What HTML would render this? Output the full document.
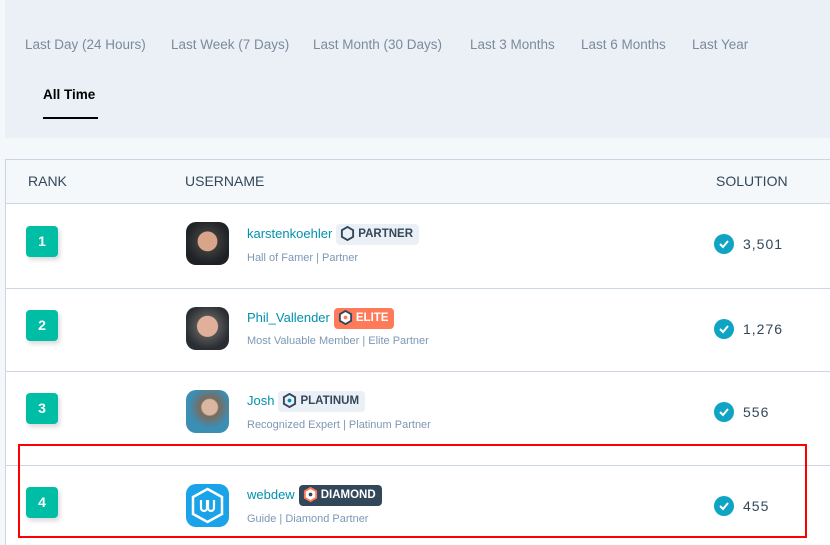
<!DOCTYPE html>
<html><head><style>
*{margin:0;padding:0;box-sizing:border-box}
html,body{width:830px;height:545px;overflow:hidden}
body{background:#f5f8fa;font-family:"Liberation Sans",sans-serif;position:relative}
.abs{position:absolute}
.top{left:5px;top:0;width:825px;height:138px;background:#eaf0f6}
.tab{position:absolute;top:37px;font-size:13.5px;color:#7b8a9c;white-space:nowrap}
.tbl{left:5px;top:159px;width:830px;height:400px;background:#fff;border:1px solid #cbd6e2}
.hdr{left:6px;top:160px;width:830px;height:44px;background:#f5f8fa;border-bottom:1px solid #cbd6e2}
.h{position:absolute;top:173px;font-size:14px;color:#33475b}
.line{position:absolute;left:6px;width:830px;height:1px;background:#cbd6e2}
.rank{position:absolute;left:26px;width:32px;height:31px;background:#00bda5;border-radius:4px;color:#fff;font-weight:bold;font-size:14px;text-align:center;line-height:31px;box-shadow:2px 3px 5px rgba(0,0,0,.15)}
.av{position:absolute;left:186px;width:43px;height:43px;border-radius:10px}
.un{position:absolute;left:247px;font-size:13px;color:#0091ae;white-space:nowrap}
.badge{display:inline-block;vertical-align:middle;margin-left:4px;padding:0 6px 0 4px;height:21px;line-height:21px;border-radius:4px;font-size:11.5px;font-weight:bold;background:#eaf0f6;color:#33475b}
.badge svg{vertical-align:-4px;margin-right:3px}
.sub{position:absolute;left:247px;font-size:11px;color:#7c98b6;white-space:nowrap}
.chk{position:absolute;left:714px;width:20px;height:20px;border-radius:50%;background:#0fa3c4}
.num{position:absolute;left:743px;font-size:14px;color:#33475b;letter-spacing:1px}
</style></head><body>
<div class="abs top"></div>
<span class="tab" style="left:25px">Last Day (24 Hours)</span>
<span class="tab" style="left:171px">Last Week (7 Days)</span>
<span class="tab" style="left:313px">Last Month (30 Days)</span>
<span class="tab" style="left:470px">Last 3 Months</span>
<span class="tab" style="left:581px">Last 6 Months</span>
<span class="tab" style="left:692px">Last Year</span>
<span class="tab" style="left:43px;top:87px;color:#000;font-weight:bold;font-size:13.5px">All Time</span>
<div class="abs" style="left:43px;top:117px;width:55px;height:2px;background:#000"></div>

<div class="abs tbl"></div>
<div class="abs hdr"></div>
<span class="h" style="left:28px">RANK</span>
<span class="h" style="left:185px">USERNAME</span>
<span class="h" style="left:716px">SOLUTION</span>
<div class="line" style="top:288px"></div>
<div class="line" style="top:371px"></div>
<div class="line" style="top:465px"></div>

<div class="rank" style="top:226px">1</div>
<div class="rank" style="top:310px">2</div>
<div class="rank" style="top:393px">3</div>
<div class="rank" style="top:487px">4</div>

<div class="av" style="top:222px;background:radial-gradient(circle at 50% 45%,#d8a58a 0 30%,#3a3a3a 32%,#1e2226 70%)"></div>
<div class="av" style="top:307px;background:radial-gradient(circle at 50% 45%,#e0b09a 0 32%,#555 34%,#2a2e33 70%)"></div>
<div class="av" style="top:390px;background:radial-gradient(circle at 55% 40%,#d9b7a0 0 22%,#7a6a5c 26%,#3b8fb5 60%)"></div>
<div class="av" style="top:484px;background:#1aa3e8"><svg width="43" height="43" viewBox="0 0 43 43"><polygon points="21.5,5 36,13 36,30 21.5,38 7,30 7,13" fill="none" stroke="#fff" stroke-width="2.5"/><path d="M15 16v8a3 3 0 0 0 6 0v-8M22 16v8a3 3 0 0 0 6 0v-8" fill="none" stroke="#fff" stroke-width="2.2"/></svg></div>

<div class="un" style="top:224px">karstenkoehler<span class="badge"><svg width="15" height="15" viewBox="0 0 16 16"><polygon points="8,1 14,4.5 14,11.5 8,15 2,11.5 2,4.5" fill="none" stroke="#33475b" stroke-width="2"/></svg>PARTNER</span></div>
<div class="sub" style="top:252px">Hall of Famer | Partner</div>
<div class="un" style="top:308px">Phil_Vallender<span class="badge" style="background:#ff7a59;color:#fff"><svg width="15" height="15" viewBox="0 0 16 16"><polygon points="8,1 14,4.5 14,11.5 8,15 2,11.5 2,4.5" fill="#fff" stroke="#33475b" stroke-width="2"/><circle cx="8" cy="8" r="2" fill="#ff7a59"/></svg>ELITE</span></div>
<div class="sub" style="top:335px">Most Valuable Member | Elite Partner</div>
<div class="un" style="top:391px">Josh<span class="badge"><svg width="15" height="15" viewBox="0 0 16 16"><polygon points="8,1 14,4.5 14,11.5 8,15 2,11.5 2,4.5" fill="none" stroke="#33475b" stroke-width="2"/><circle cx="8" cy="8" r="2" fill="#0091ae"/></svg>PLATINUM</span></div>
<div class="sub" style="top:419px">Recognized Expert | Platinum Partner</div>
<div class="un" style="top:485px">webdew<span class="badge" style="background:#33475b;color:#fff"><svg width="15" height="15" viewBox="0 0 16 16"><polygon points="8,1 14,4.5 14,11.5 8,15 2,11.5 2,4.5" fill="#fff" stroke="#ff7a59" stroke-width="2"/><circle cx="8" cy="8" r="2" fill="#33475b"/></svg>DIAMOND</span></div>
<div class="sub" style="top:513px">Guide | Diamond Partner</div>

<div class="chk" style="top:234px"><svg width="20" height="20"><path d="M6 10l3 3 5-6" fill="none" stroke="#fff" stroke-width="2"/></svg></div>
<div class="chk" style="top:319px"><svg width="20" height="20"><path d="M6 10l3 3 5-6" fill="none" stroke="#fff" stroke-width="2"/></svg></div>
<div class="chk" style="top:402px"><svg width="20" height="20"><path d="M6 10l3 3 5-6" fill="none" stroke="#fff" stroke-width="2"/></svg></div>
<div class="chk" style="top:496px"><svg width="20" height="20"><path d="M6 10l3 3 5-6" fill="none" stroke="#fff" stroke-width="2"/></svg></div>
<span class="num" style="top:236px">3,501</span>
<span class="num" style="top:321px">1,276</span>
<span class="num" style="top:404px">556</span>
<span class="num" style="top:498px">455</span>

<div class="abs" style="left:18px;top:444px;width:789px;height:94px;border:2px solid #f00"></div>
</body></html>
